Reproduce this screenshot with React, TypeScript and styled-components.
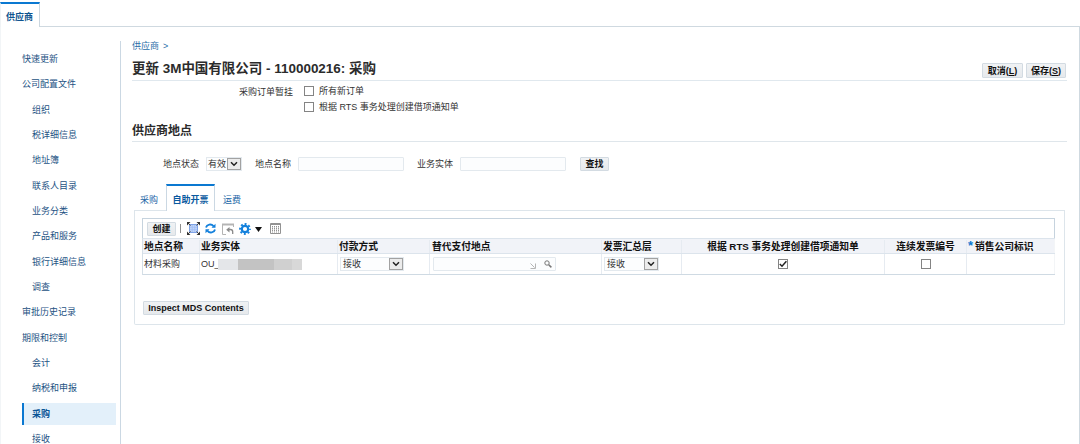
import styled, { createGlobalStyle, css } from "styled-components";

const GlobalStyle = createGlobalStyle`
  * {
    box-sizing: border-box;
  }
  body {
    margin: 0;
    background: #ffffff;
    color: #333333;
    font-family: "Liberation Sans", "Noto Sans CJK SC", sans-serif;
    font-size: 9px;
    line-height: 12px;
    overflow: hidden;
  }
`;

const Page = styled.div`
  display: flex;
  flex-direction: column;
  width: 1080px;
  height: 444px;
  overflow: hidden;
  white-space: nowrap;
`;

const TopBar = styled.div`
  display: flex;
  height: 27px;
  padding-top: 2px;
`;

const TopTab = styled.div`
  width: 40px;
  padding: 7px 0 0 5px;
  border-top: 2px solid #0a78d1;
  border-right: 1px solid #cbd7e0;
  border-left: 1px solid #f0f3f5;
  color: #0f558f;
  font-weight: bold;
`;

const TopLine = styled.div`
  flex: 1;
  border-bottom: 1px solid #cfd9e0;
`;

const Frame = styled.div`
  display: flex;
  flex: 1;
  min-height: 0;
  border-left: 1px solid #f2f5f7;
  border-right: 1px solid #cfd9e0;
`;

const Sidebar = styled.div`
  width: 120px;
  flex-shrink: 0;
  margin-top: 14px;
  padding: 7px 4px 0 21px;
  border-right: 1px solid #cbd8e3;
  overflow: hidden;
`;

const MenuItem = styled.div<{ $child?: boolean; $active?: boolean }>`
  height: 22.35px;
  margin-bottom: 3px;
  padding-left: ${({ $child }) => ($child ? "10px" : "0")};
  line-height: 22px;
  color: #1d5283;
  ${({ $active }) =>
    $active &&
    css`
      padding-left: 8px;
      border-left: 2px solid #0a78d1;
      background: #e3f0fa;
      color: #0a5596;
      font-weight: bold;
    `}
`;

const Main = styled.div`
  display: flex;
  flex-direction: column;
  flex: 1;
  padding: 12px 12px 0 11px;
`;

const Breadcrumb = styled.div`
  display: flex;
  gap: 4px;
  height: 22px;
  line-height: 14px;
  color: #2a6ea8;
`;

const TitleRow = styled.div`
  display: flex;
  justify-content: space-between;
  height: 20px;
  border-bottom: 1px solid #e0e8ee;
`;

const Title = styled.div`
  font-size: 13.47px;
  font-weight: bold;
  line-height: 15px;
  color: #2b2b2b;
`;

const Actions = styled.div`
  display: flex;
  gap: 3px;
  padding: 2px 1px 0 0;
`;

const Button = styled.button<{ $width: number; $height?: number }>`
  width: ${({ $width }) => $width}px;
  height: ${({ $height }) => $height || 14}px;
  flex-shrink: 0;
  padding: 0;
  border: 1px solid #d3dbe2;
  border-radius: 1px;
  background: linear-gradient(#f0f2f4, #e6e9ec);
  color: #111111;
  font-family: inherit;
  font-size: 9px;
  font-weight: bold;
  line-height: 12px;
  white-space: nowrap;
`;

const HoldOptions = styled.div`
  display: grid;
  grid-template-columns: 161px 1fr;
  column-gap: 11px;
  height: 39px;
  padding-top: 2px;
`;

const HoldLabel = styled.div`
  line-height: 18px;
  text-align: right;
`;

const CheckLine = styled.div`
  display: flex;
  align-items: center;
  gap: 5px;
  height: 16px;
`;

const CheckBox = styled.span`
  display: inline-flex;
  width: 10px;
  height: 10px;
  flex-shrink: 0;
  border: 1px solid #848484;
  background: #ffffff;

  svg {
    display: block;
  }
`;

const SectionTitle = styled.div`
  height: 22px;
  border-bottom: 1px solid #dfe6eb;
  font-size: 12px;
  font-weight: bold;
  line-height: 22px;
  color: #2b2b2b;
`;

const Filters = styled.div`
  display: flex;
  align-items: center;
  height: 42px;
  padding: 2px 0 0 31px;
`;

const Field = styled.div<{ $gap: number; $after: number }>`
  display: flex;
  align-items: center;
  gap: ${({ $gap }) => $gap}px;
  margin-right: ${({ $after }) => $after}px;
`;

const TextInput = styled.div<{ $width: number }>`
  display: flex;
  align-items: center;
  justify-content: flex-end;
  gap: 8px;
  width: ${({ $width }) => $width}px;
  height: 14px;
  padding: 0 3px;
  border: 1px solid #e3e9ee;
  border-radius: 1px;
  background: #fcfdfe;
`;

const Select = styled.div<{ $width: number; $indent?: number }>`
  display: flex;
  justify-content: space-between;
  align-items: center;
  width: ${({ $width }) => $width}px;
  height: 14px;
  padding-left: ${({ $indent = 1 }) => $indent}px;
  border: 1px solid #e3e9ee;
  background: #fcfdfe;
`;

const SelectArrow = styled.span`
  display: flex;
  align-items: center;
  justify-content: center;
  width: 14px;
  height: 12px;
  border: 1px solid #a2a2a2;
  background: #ececec;
`;

const Tabs = styled.div`
  display: flex;
  height: 27px;
  margin-left: 2px;
`;

const Tab = styled.div<{ $width: number; $active?: boolean }>`
  width: ${({ $width }) => $width}px;
  padding-top: ${({ $active }) => ($active ? "8px" : "10px")};
  padding-right: ${({ $active }) => ($active ? "0" : "2px")};
  border-bottom: ${({ $active }) => ($active ? "none" : "1px solid #dde5eb")};
  color: #1b66a6;
  line-height: 13px;
  text-align: center;
  ${({ $active }) =>
    $active &&
    css`
      border-top: 2px solid #0a78d1;
      border-left: 1px solid #cbd8e3;
      border-right: 1px solid #cbd8e3;
      color: #0a5aa0;
      font-weight: bold;
    `}
`;

const TabLine = styled.div`
  flex: 1;
  margin-right: 2px;
  border-bottom: 1px solid #dde5eb;
`;

const Panel = styled.div`
  height: 114px;
  margin: 0 2px;
  padding: 7px 9px 0 7px;
  border: 1px solid #dde5eb;
  border-top: none;
  border-radius: 0 0 2px 2px;
`;

const Toolbar = styled.div`
  display: flex;
  align-items: center;
  height: 20px;
  padding-left: 4px;
  border: 1px solid #c6d3de;
  border-bottom: none;

  svg {
    flex-shrink: 0;
  }
`;

const Separator = styled.span`
  width: 1px;
  height: 9px;
  margin: 0 6px 0 4px;
  background: #8d8d8d;
`;

const ToolIcons = styled.div`
  display: grid;
  grid-template-columns: 18px 17px 17px 16px 15px 11px;
  align-items: center;
`;

const Table = styled.div`
  border-left: 1px solid #d5dfe7;
  border-bottom: 1px solid #cfdae3;
`;

const Row = styled.div<{ $head?: boolean }>`
  display: grid;
  grid-template-columns: 57px 138px 92px 172px 80px 203px 82px 1fr;
  height: ${({ $head }) => ($head ? "16px" : "20px")};
  background: ${({ $head }) => ($head ? "#f1f3f8" : "#ffffff")};
  ${({ $head }) =>
    $head &&
    css`
      padding-top: 1px;
      border-top: 1px solid #dce4ec;
      border-bottom: 1px solid #dce4ec;
      color: #111111;
      font-size: 9.75px;
      font-weight: bold;
    `}
`;

const Cell = styled.div<{ $center?: boolean; $indent?: number }>`
  display: flex;
  align-items: center;
  justify-content: ${({ $center }) => ($center ? "center" : "flex-start")};
  padding-left: ${({ $center, $indent = 1 }) => ($center ? 0 : $indent)}px;
  border-right: 1px solid #e6ebf1;

  &:last-child {
    border-right: 1px solid #f3f5f7;
  }
`;

const Required = styled.span`
  align-self: flex-start;
  margin-right: 2px;
  color: #0a78d1;
  font-size: 13px;
  line-height: 11px;
`;

const Redacted = styled.span`
  width: 84px;
  height: 11px;
  background: linear-gradient(
    to right,
    #e4e6e9 0 20px,
    #c3c3c3 20px 56px,
    #d0d0d0 56px 74px,
    #d8d8d8 74px
  );
`;

const EntityName = styled.span`
  width: 17px;
`;

const Footer = styled.div`
  padding: 26px 0 0 1px;
`;

const Check = () => (
  <svg width="8" height="8" viewBox="0 0 8 8" fill="none" stroke="#222" strokeWidth="1.5">
    <path d="M.8 4 3 6.2 7.4 1.2" />
  </svg>
);

const Arrow = () => (
  <SelectArrow>
    <svg width="8" height="6" viewBox="0 0 8 6" fill="none" stroke="#222" strokeWidth="1.5">
      <path d="m1 1.2 3 3 3-3" />
    </svg>
  </SelectArrow>
);

const DetachIcon = () => (
  <svg width="13" height="13" viewBox="0 0 13 13">
    <rect x="2.5" y="2.5" width="8" height="8" fill="#c0d5fa" stroke="#7fa3e6" />
    <path d="M3 5.3h7M3 7.7h7M5.3 3v7M7.7 3v7" stroke="#9dbcf2" strokeWidth=".7" />
    <path d="M1 1l2.5 2.5M12 1 9.5 3.5M1 12l2.5-2.5M12 12 9.5 9.5" stroke="#444" strokeWidth="1" />
    <path d="M0 0h3.5L0 3.5zM13 0v3.5L9.5 0zM0 13V9.5L3.5 13zM13 13H9.5L13 9.5z" fill="#333" />
  </svg>
);

const RefreshIcon = () => (
  <svg width="11" height="11" viewBox="0 0 11 11" fill="none" stroke="#1380dc" strokeWidth="1.9">
    <path d="M1 4.5C1.8 1.2 6.3.5 8.5 3.1M10 6.5C9.2 9.8 4.7 10.5 2.5 7.9" />
    <path d="M10.5.7v4H6.5zM.5 10.3v-4h4z" fill="#1380dc" stroke="none" />
  </svg>
);

const UndoIcon = () => (
  <svg width="12" height="12" viewBox="0 0 12 12" fill="none" stroke="#b4b4b4">
    <path d="M.5 1v10.5H4M11.5 1v3" />
    <path d="M0 1.5h12" strokeWidth="2" />
    <path d="M6 6.5h2.5q2.2 0 2.2 2.2V11" stroke="#8a8a8a" strokeWidth="1.3" />
    <path d="M7.5 4v5.4L4.2 6.7z" fill="#8a8a8a" stroke="none" />
  </svg>
);

const GearIcon = () => (
  <svg width="12" height="12" viewBox="0 0 12 12" fill="none" stroke="#1380dc">
    <circle cx="6" cy="6" r="3.2" strokeWidth="2.2" />
    <circle cx="6" cy="6" r="4.9" strokeWidth="2" strokeDasharray="1.9 1.948" strokeDashoffset=".95" />
  </svg>
);

const CaretIcon = () => (
  <svg width="7" height="7" viewBox="0 0 7 7">
    <path d="M0 2h7L3.5 7z" fill="#111" />
  </svg>
);

const ColumnsIcon = () => (
  <svg width="11" height="11" viewBox="0 0 11 11" fill="none" stroke="#929292">
    <path d="M.5.5h10v10H.5zM.5 1.5h10" />
    <path d="M2.5 3v6.5M4.5 3v6.5M6.5 3v6.5M8.5 3v6.5" strokeDasharray="1.5 .5" />
  </svg>
);

const LovIcon = () => (
  <svg width="6" height="10" viewBox="0 0 6 10" fill="none" stroke="#b5b5b5">
    <path d="m.5 4.5 4 4M5.5 4.5v5h-5" />
  </svg>
);

const SearchIcon = () => (
  <svg width="8" height="8" viewBox="0 0 8 8" fill="none" stroke="#777777">
    <circle cx="3" cy="3" r="2.2" />
    <path d="m4.7 4.7 2.7 2.7" strokeWidth="1.5" />
  </svg>
);

const MENU = [
  { label: "快速更新" },
  { label: "公司配置文件" },
  { label: "组织", child: true },
  { label: "税详细信息", child: true },
  { label: "地址簿", child: true },
  { label: "联系人目录", child: true },
  { label: "业务分类", child: true },
  { label: "产品和服务", child: true },
  { label: "银行详细信息", child: true },
  { label: "调查", child: true },
  { label: "审批历史记录" },
  { label: "期限和控制" },
  { label: "会计", child: true },
  { label: "纳税和申报", child: true },
  { label: "采购", child: true, active: true },
  { label: "接收", child: true },
];

export default function App() {
  return (
    <Page>
      <GlobalStyle />
      <TopBar>
        <TopTab>供应商</TopTab>
        <TopLine />
      </TopBar>
      <Frame>
        <Sidebar>
          {MENU.map(({ label, child, active }) => (
            <MenuItem key={label} $child={child} $active={active}>
              {label}
            </MenuItem>
          ))}
        </Sidebar>
        <Main>
          <Breadcrumb>
            <span>供应商</span>
            <span>&gt;</span>
          </Breadcrumb>
          <TitleRow>
            <Title>更新 3M中国有限公司 - 110000216: 采购</Title>
            <Actions>
              <Button $width={41} $height={15}>
                取消(<u>L</u>)
              </Button>
              <Button $width={40} $height={15}>
                保存(<u>S</u>)
              </Button>
            </Actions>
          </TitleRow>
          <HoldOptions>
            <HoldLabel>采购订单暂挂</HoldLabel>
            <div>
              <CheckLine>
                <CheckBox />
                所有新订单
              </CheckLine>
              <CheckLine>
                <CheckBox />
                根据 RTS 事务处理创建借项通知单
              </CheckLine>
            </div>
          </HoldOptions>
          <SectionTitle>供应商地点</SectionTitle>
          <Filters>
            <Field $gap={7} $after={13}>
              地点状态
              <Select $width={36}>
                有效
                <Arrow />
              </Select>
            </Field>
            <Field $gap={7} $after={13}>
              地点名称
              <TextInput $width={106} />
            </Field>
            <Field $gap={7} $after={14}>
              业务实体
              <TextInput $width={106} />
            </Field>
            <Button $width={29}>查找</Button>
          </Filters>
          <Tabs>
            <Tab $width={32}>采购</Tab>
            <Tab $width={49} $active>
              自助开票
            </Tab>
            <Tab $width={36}>运费</Tab>
            <TabLine />
          </Tabs>
          <Panel>
            <Toolbar>
              <Button $width={29}>创建</Button>
              <Separator />
              <ToolIcons>
                <DetachIcon />
                <RefreshIcon />
                <UndoIcon />
                <GearIcon />
                <CaretIcon />
                <ColumnsIcon />
              </ToolIcons>
            </Toolbar>
            <Table>
              <Row $head>
                <Cell>地点名称</Cell>
                <Cell>业务实体</Cell>
                <Cell>付款方式</Cell>
                <Cell $indent={2}>替代支付地点</Cell>
                <Cell>发票汇总层</Cell>
                <Cell $center>根据 RTS 事务处理创建借项通知单</Cell>
                <Cell $center>连续发票编号</Cell>
                <Cell>
                  <Required>*</Required>
                  销售公司标识
                </Cell>
              </Row>
              <Row>
                <Cell>材料采购</Cell>
                <Cell>
                  <EntityName>OU_</EntityName>
                  <Redacted />
                </Cell>
                <Cell $indent={2}>
                  <Select $width={64} $indent={2}>
                    接收
                    <Arrow />
                  </Select>
                </Cell>
                <Cell $indent={3}>
                  <TextInput $width={123}>
                    <LovIcon />
                    <SearchIcon />
                  </TextInput>
                </Cell>
                <Cell $indent={2}>
                  <Select $width={55} $indent={2}>
                    接收
                    <Arrow />
                  </Select>
                </Cell>
                <Cell $center>
                  <CheckBox>
                    <Check />
                  </CheckBox>
                </Cell>
                <Cell $center>
                  <CheckBox />
                </Cell>
                <Cell />
              </Row>
            </Table>
            <Footer>
              <Button $width={106}>Inspect MDS Contents</Button>
            </Footer>
          </Panel>
        </Main>
      </Frame>
    </Page>
  );
}
